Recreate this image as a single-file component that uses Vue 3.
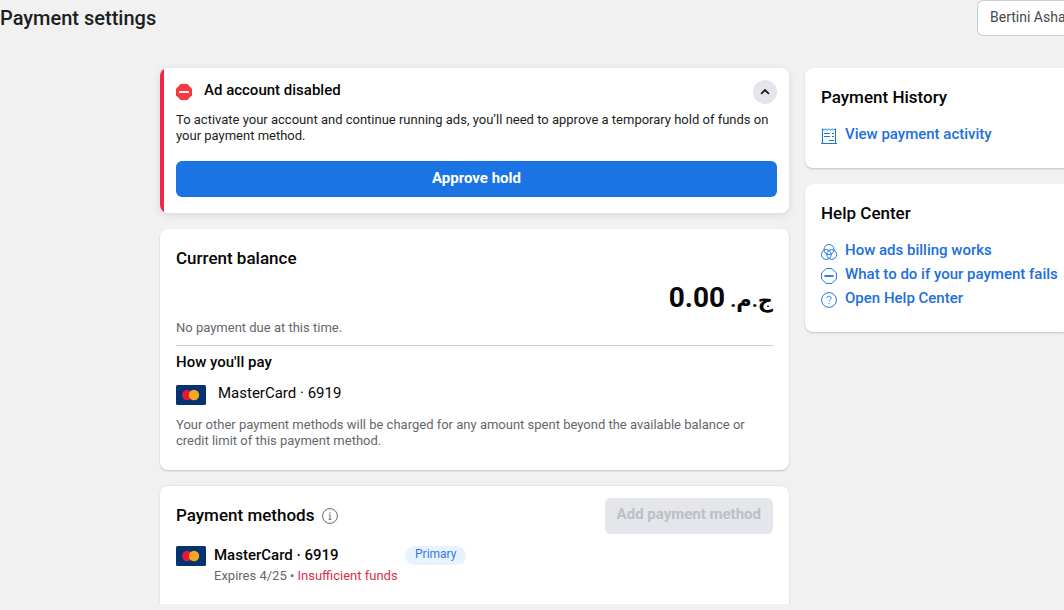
<script setup>
const card = { brand: 'MasterCard', last4: '6919', expires: '4/25' }
const helpLinks = [
  { icon: 'circles', label: 'How ads billing works' },
  { icon: 'blocked', label: 'What to do if your payment fails' },
  { icon: 'question', label: 'Open Help Center' },
]
</script>

<template>
  <div class="page">
    <header class="top">
      <h1>Payment settings</h1>
      <button type="button" class="account">Bertini Asha</button>
    </header>

    <div class="columns">
      <main class="main">
        <section class="card alert">
          <div class="alert-head">
            <svg class="stop" viewBox="0 0 16 16" aria-hidden="true">
              <path d="M4.7 0h6.6L16 4.7v6.6L11.3 16H4.7L0 11.3V4.7z" fill="#fa383e" />
              <rect x="3" y="7" width="10" height="2" rx=".6" fill="#fff" />
            </svg>
            <h2 class="small-title">Ad account disabled</h2>
            <button type="button" class="collapse" aria-label="Collapse">
              <svg viewBox="0 0 24 24" aria-hidden="true">
                <path d="M8.6 13.3L12 10l3.4 3.3" fill="none" stroke="#1c1e21" stroke-width="1.8" stroke-linecap="round" stroke-linejoin="round" />
              </svg>
            </button>
          </div>
          <p class="body">To activate your account and continue running ads, you’ll need to approve a temporary hold of funds on your payment method.</p>
          <button type="button" class="primary">Approve hold</button>
        </section>

        <section class="card balance">
          <h2>Current balance</h2>
          <p class="amount" dir="rtl"><span class="currency">ج.م. </span>0.00</p>
          <p class="body muted due">No payment due at this time.</p>
          <h3 class="small-title">How you'll pay</h3>
          <div class="method">
            <svg class="logo" viewBox="0 0 30 20" aria-hidden="true">
              <rect width="30" height="20" rx="1.5" fill="#05336f" />
              <circle cx="11.2" cy="10" r="5.2" fill="#e51937" />
              <circle cx="18" cy="10" r="5.2" fill="#f5a623" />
            </svg>
            <span class="method-name">{{ card.brand }} · {{ card.last4 }}</span>
          </div>
          <p class="body muted">Your other payment methods will be charged for any amount spent beyond the available balance or credit limit of this payment method.</p>
        </section>

        <section class="card methods">
          <div class="methods-head">
            <h2>Payment methods</h2>
            <svg class="info" viewBox="0 0 16 16" fill="none" stroke="#606770" aria-hidden="true">
              <circle cx="8" cy="8" r="7.4" />
              <path d="M6.8 7H8v4.2M6.6 11.3h2.8" />
              <circle cx="8" cy="4.9" r=".7" fill="#606770" stroke="none" />
            </svg>
            <button type="button" class="add" disabled>Add payment method</button>
          </div>
          <div class="saved">
            <svg class="logo" viewBox="0 0 30 20" aria-hidden="true">
              <rect width="30" height="20" rx="1.5" fill="#05336f" />
              <circle cx="11.2" cy="10" r="5.2" fill="#e51937" />
              <circle cx="18" cy="10" r="5.2" fill="#f5a623" />
            </svg>
            <div class="saved-info">
              <h3 class="small-title">{{ card.brand }} · {{ card.last4 }}</h3>
              <p class="body muted">Expires {{ card.expires }} • <span class="error">Insufficient funds</span></p>
            </div>
            <span class="badge">Primary</span>
          </div>
        </section>
      </main>

      <aside class="side">
        <section class="card side-card">
          <h2>Payment History</h2>
          <ul>
            <li>
              <svg class="link-icon" viewBox="0 0 16 16" fill="none" stroke="#1b74e4" aria-hidden="true">
                <path d="M1.5 15V.8l1.6 1.4L4.8.8l1.6 1.4L8 .8l1.6 1.4L11.2.8l1.7 1.4L14.5.8V15M0 15.5h16" />
                <path d="M3 5.5h6M11 5.5h2M3 8.5h6M11 8.5h2M8 12.5h5" />
              </svg>
              <a href="#">View payment activity</a>
            </li>
          </ul>
        </section>

        <section class="card side-card">
          <h2>Help Center</h2>
          <ul>
            <li v-for="link in helpLinks" :key="link.label">
              <svg class="link-icon" viewBox="0 0 16 16" fill="none" stroke="#1b74e4" aria-hidden="true">
                <template v-if="link.icon === 'circles'">
                  <circle cx="8" cy="5.5" r="5" />
                  <circle cx="5.3" cy="10.5" r="4.9" />
                  <circle cx="10.7" cy="10.5" r="4.9" />
                </template>
                <template v-else-if="link.icon === 'blocked'">
                  <path d="M5 .6h6L15.4 5v6L11 15.4H5L.6 11V5z" />
                  <path d="M3.4 8h9.2" stroke-width="1.8" />
                </template>
                <template v-else>
                  <circle cx="8" cy="8" r="7.4" />
                  <path d="M5.9 6.3c0-1.3.9-2.1 2.1-2.1s2.1.8 2.1 1.9c0 1.6-2.1 1.7-2.1 3.5" />
                  <circle cx="8" cy="11.6" r=".7" fill="#1b74e4" stroke="none" />
                </template>
              </svg>
              <a href="#">{{ link.label }}</a>
            </li>
          </ul>
        </section>
      </aside>
    </div>
  </div>
</template>

<style>
body {
  margin: 0;
  background: #f1f1f1;
}
</style>

<style scoped>
.page {
  font-family: Roboto, "DejaVu Sans", sans-serif;
  color: #050505;
  overflow: hidden;
}
h1, h2, h3, p, ul {
  margin: 0;
  padding: 0;
}
button {
  font-family: inherit;
  border: 0;
}
.top {
  display: flex;
  justify-content: space-between;
  align-items: flex-start;
  margin-bottom: 32px;
}
h1 {
  font-size: 20px;
  line-height: 36px;
  font-weight: 500;
  color: #1c1e21;
}
.account {
  width: 87px;
  height: 36px;
  padding: 0 0 2px 12px;
  border: 1px solid #ccd0d5;
  border-right: 0;
  border-radius: 6px 0 0 6px;
  background: #fff;
  color: #444950;
  font-size: 14px;
  text-align: left;
  white-space: nowrap;
}
.columns {
  display: grid;
  grid-template-columns: minmax(0, 1fr) 259px;
  gap: 16px;
  padding-left: 160px;
}
.main, .side {
  display: flex;
  flex-direction: column;
  gap: 16px;
}
.card {
  background: #fff;
  border-radius: 8px;
  box-shadow: 0 1px 2px rgba(0, 0, 0, 0.2);
}
h2 {
  font-size: 17px;
  line-height: 20px;
  font-weight: 500;
}
.small-title {
  font-size: 15px;
  line-height: 20px;
  font-weight: 500;
}
.body {
  font-size: 13px;
  line-height: 16px;
  color: #1c1e21;
}
.muted {
  color: #65676b;
}
.alert {
  background: linear-gradient(to right, #f02849 4px, #fff 4px);
  padding: 12px 12px 16px 16px;
  box-shadow: 0 2px 8px rgba(0, 0, 0, 0.1);
}
.alert-head {
  display: flex;
  align-items: center;
  gap: 12px;
  margin-bottom: 8px;
}
.alert-head h2 {
  flex: 1;
  padding-bottom: 4px;
}
.stop {
  width: 16px;
  height: 16px;
}
.collapse {
  width: 24px;
  height: 24px;
  padding: 0;
  border-radius: 50%;
  background: #e4e6eb;
}
.collapse svg {
  display: block;
}
.primary {
  width: 100%;
  height: 36px;
  margin-top: 17px;
  padding: 0 0 2px;
  border-radius: 6px;
  background: #1b74e4;
  color: #fff;
  font-size: 15px;
  font-weight: 700;
}
.balance {
  padding: 19px 16px 21px;
}
.amount {
  margin-top: 12px;
  font-size: 28px;
  line-height: 36px;
  font-weight: 700;
}
.currency {
  font-size: 21px;
  line-height: 20px;
}
.due {
  padding: 4px 0 9px;
  margin-bottom: 6px;
  border-bottom: 1px solid #ccc;
}
.method {
  display: flex;
  align-items: center;
  gap: 12px;
  margin: 11px 0 10px;
}
.logo {
  flex: none;
  width: 30px;
  height: 20px;
}
.method-name {
  font-size: 15px;
  line-height: 20px;
  padding-bottom: 4px;
}
.methods {
  padding: 12px 16px 20px;
  border-radius: 8px 8px 0 0;
  box-shadow: 0 0 2px rgba(0, 0, 0, 0.15);
}
.methods-head {
  display: flex;
  align-items: center;
  gap: 8px;
  margin-bottom: 12px;
}
.methods-head h2 {
  padding-bottom: 2px;
}
.info {
  width: 16px;
  height: 16px;
}
.add {
  height: 36px;
  margin-left: auto;
  padding: 0 12px 4px;
  border-radius: 6px;
  background: #e4e6eb;
  color: #bcc0c4;
  font-size: 15px;
  font-weight: 700;
}
.saved {
  display: flex;
  align-items: flex-start;
  gap: 8px;
}
.saved-info {
  width: 183px;
  white-space: nowrap;
}
.saved-info h3 {
  line-height: 18px;
}
.saved-info p {
  margin-top: 4px;
}
.error {
  color: #d9304c;
}
.badge {
  padding: 0 10px 2px;
  border-radius: 10px;
  background: #e7f3ff;
  color: #3578e5;
  font-size: 12px;
  line-height: 17px;
}
.side-card {
  padding: 19px 0 22px 16px;
  border-radius: 8px 0 0 8px;
}
.side-card ul {
  list-style: none;
  margin-top: 15px;
}
.side-card li {
  display: flex;
  align-items: flex-end;
  gap: 8px;
  height: 24px;
}
.link-icon {
  width: 16px;
  height: 16px;
  margin-bottom: 2px;
}
.side-card a {
  color: #216fdb;
  font-size: 15px;
  line-height: 24px;
  font-weight: 500;
  text-decoration: none;
  white-space: nowrap;
}
</style>
